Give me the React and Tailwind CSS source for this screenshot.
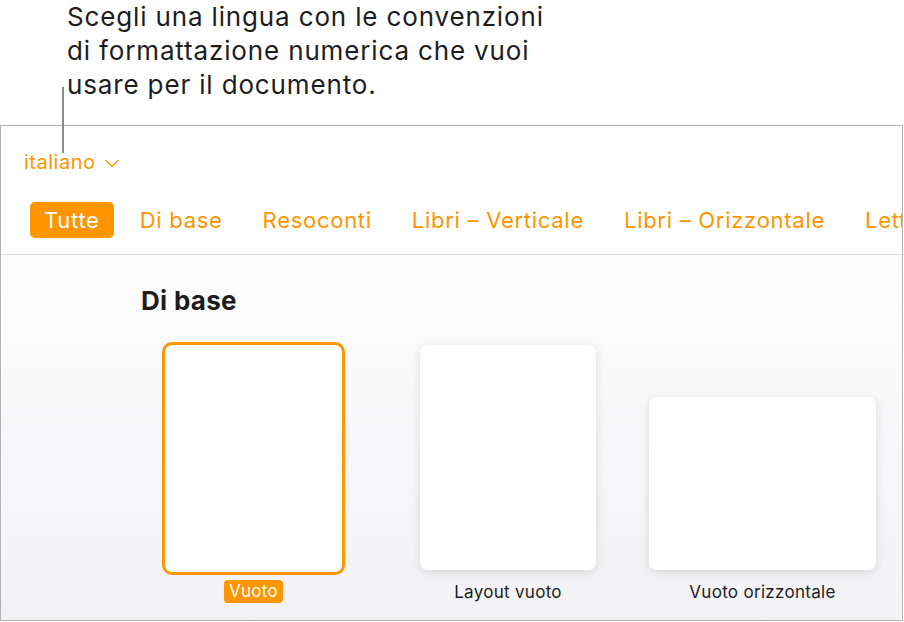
const tabs = ['Tutte', 'Di base', 'Resoconti', 'Libri – Verticale', 'Libri – Orizzontale', 'Lettere'];

export default function App() {
  return (
    <div className="relative w-[904px] h-[622px] overflow-hidden bg-white text-[#1d1d1f]" style={{ fontFamily: 'Inter, "Noto Sans", sans-serif' }}>
      {/* callout */}
      <div className="pl-[67px] text-[26px] leading-[34px] tracking-[0.85px]">
        <p>Scegli una lingua con le convenzioni</p>
        <p>di formattazione numerica che vuoi</p>
        <p>usare per il documento.</p>
      </div>
      <div className="absolute left-[62px] top-[87px] w-[2px] h-[66px] bg-[#8a8a8a]" />

      {/* window frame */}
      <div className="mt-[23px] w-[903px] h-[496px] border-[1.5px] border-[#b3b3b3] overflow-hidden flex flex-col">
        <div className="h-[129px] bg-white border-b-[1.5px] border-[#dadada] flex flex-col">
          <div className="pl-[23px] pt-[22px] flex items-center gap-[10px] text-[#ff9500] text-[20px] leading-[28px] tracking-[0.5px]">
            <span>italiano</span>
            <svg width="14" height="9" viewBox="0 0 14 9" fill="none" stroke="#ff9500" strokeWidth="1.4" strokeLinecap="round" strokeLinejoin="round" className="mt-[2px]">
              <polyline points="1,1.5 7,7.5 13,1.5" />
            </svg>
          </div>
          <div className="mt-[26px] pl-[29px] flex items-center gap-3 whitespace-nowrap">
            {tabs.map((t, i) => (
              <span
                key={t}
                className={`px-[14px] h-[36px] flex items-center rounded-[5px] text-[22px] tracking-[0.72px] ${i === 0 ? 'bg-[#ff9500] text-white' : 'text-[#ff9500]'}`}
              >
                {t}
              </span>
            ))}
          </div>
        </div>

        <div className="flex-1 bg-linear-to-b from-[#fdfdfd] to-[#f2f2f5] pt-[30px]">
          <h2 className="pl-[140px] text-[26px] leading-[32px] font-bold tracking-[0.3px]">Di base</h2>
          <div className="mt-[25px] pl-[161px] flex items-start">
            <div className="w-[183px] flex flex-col items-center">
              <div className="w-[183px] h-[233px] rounded-[10px] border-[3.5px] border-[#ff9500] bg-white" />
              <span className="mt-[5px] px-[5px] h-[23px] flex items-center rounded-[4px] bg-[#ff9500] text-white text-[17px] tracking-[0.3px]">Vuoto</span>
            </div>
            <div className="ml-[75px] mt-[3px] w-[176px] flex flex-col items-center">
              <div className="w-[176px] h-[225px] rounded-[7px] bg-white shadow-[0_2px_10px_rgba(0,0,0,0.13)]" />
              <span className="mt-[11px] h-[23px] flex items-center text-[17px] tracking-[0.3px]">Layout vuoto</span>
            </div>
            <div className="ml-[53px] mt-[55px] w-[227px] flex flex-col items-center">
              <div className="w-[227px] h-[173px] rounded-[7px] bg-white shadow-[0_2px_10px_rgba(0,0,0,0.13)]" />
              <span className="mt-[11px] h-[23px] flex items-center text-[17px] tracking-[0.3px]">Vuoto orizzontale</span>
            </div>
          </div>
        </div>
      </div>
    </div>
  );
}
